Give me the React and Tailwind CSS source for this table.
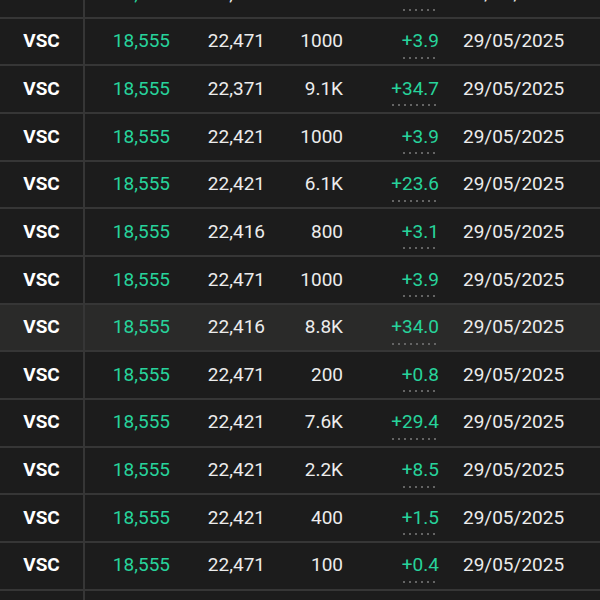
const ROWS = [
  { sym: 'VSC', price: '18,555', ref: '22,421', vol: '1000', chg: '+3.9' },
  { sym: 'VSC', price: '18,555', ref: '22,471', vol: '1000', chg: '+3.9' },
  { sym: 'VSC', price: '18,555', ref: '22,371', vol: '9.1K', chg: '+34.7' },
  { sym: 'VSC', price: '18,555', ref: '22,421', vol: '1000', chg: '+3.9' },
  { sym: 'VSC', price: '18,555', ref: '22,421', vol: '6.1K', chg: '+23.6' },
  { sym: 'VSC', price: '18,555', ref: '22,416', vol: '800', chg: '+3.1' },
  { sym: 'VSC', price: '18,555', ref: '22,471', vol: '1000', chg: '+3.9' },
  { sym: 'VSC', price: '18,555', ref: '22,416', vol: '8.8K', chg: '+34.0', active: true },
  { sym: 'VSC', price: '18,555', ref: '22,471', vol: '200', chg: '+0.8' },
  { sym: 'VSC', price: '18,555', ref: '22,421', vol: '7.6K', chg: '+29.4' },
  { sym: 'VSC', price: '18,555', ref: '22,421', vol: '2.2K', chg: '+8.5' },
  { sym: 'VSC', price: '18,555', ref: '22,421', vol: '400', chg: '+1.5' },
  { sym: 'VSC', price: '18,555', ref: '22,471', vol: '100', chg: '+0.4' },
  { sym: 'VSC', price: '18,555', ref: '22,421', vol: '1000', chg: '+3.9' },
]

export default function App() {
  return (
    <div
      className="w-[600px] h-[600px] overflow-hidden bg-[#1c1c1c] text-[19px] text-[#ececec]"
      style={{ fontFamily: 'Roboto, "Liberation Sans", sans-serif' }}
    >
      <div className="-mt-[29px]">
        {ROWS.map((r, i) => (
          <div
            key={i}
            className={`flex items-stretch h-[47.67px] border-b-2 border-[#363636] ${r.active ? 'bg-[#2a2a29]' : ''}`}
          >
            {/* Mã */}
            <div className="w-[85px] flex items-center justify-center border-r-2 border-[#363636] font-bold text-white">
              {r.sym}
            </div>
            <div className="w-[85px] flex items-center justify-end text-[#27d39b]">{r.price}</div>
            <div className="w-[95px] flex items-center justify-end">{r.ref}</div>
            <div className="w-[78px] flex items-center justify-end">{r.vol}</div>
            {/* Thay đổi + gạch chấm */}
            <div className="w-[96px] flex items-center justify-end">
              <span className="relative text-[#27d39b]">
                {r.chg}
                <span className="absolute left-[1px] right-0 -bottom-[3px] h-[2px] bg-[linear-gradient(to_right,#646464_2px,transparent_2px)] bg-[length:6px_2px] bg-repeat-x" />
              </span>
            </div>
            <div className="flex items-center pl-[24px]">29/05/2025</div>
          </div>
        ))}
      </div>
    </div>
  )
}
